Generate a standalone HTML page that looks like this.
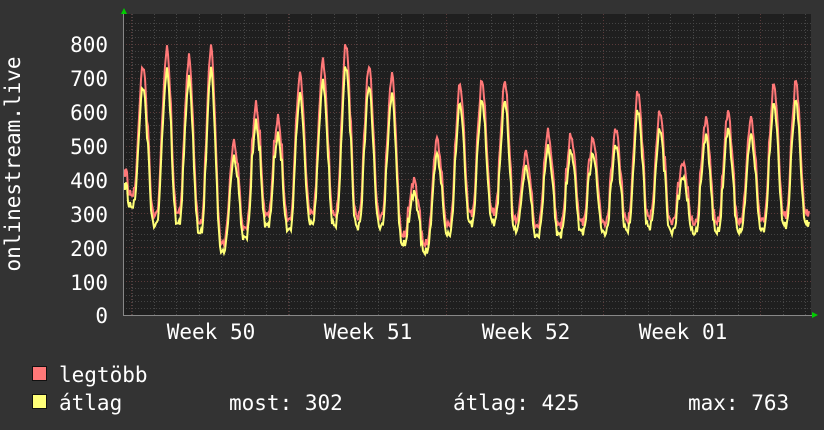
<!DOCTYPE html>
<html><head><meta charset="utf-8"><style>
html,body{margin:0;padding:0;background:#333333;width:824px;height:430px;overflow:hidden}
svg{display:block}
text{font-family:"DejaVu Sans Mono","Liberation Mono",monospace;fill:#ffffff;font-size:21px}
</style></head><body>
<svg id="g" width="824" height="430" xmlns="http://www.w3.org/2000/svg">
<rect x="0" y="0" width="824" height="430" fill="#333333"/>
<rect x="123" y="14" width="688" height="302" fill="#1f1f1f"/>
<g id="grid"></g>
<path id="red" fill="none" stroke="#ff7878" stroke-width="2"/>
<path id="yel" fill="none" stroke="#ffff78" stroke-width="2"/>
<line x1="123" y1="315.5" x2="812" y2="315.5" stroke="#888" stroke-width="1"/>
<line x1="123.5" y1="14" x2="123.5" y2="316" stroke="#888" stroke-width="1"/>
<polygon points="121,14 127,14 124,8" fill="#00cc00"/>
<polygon points="812,312 812,318 818,315" fill="#00cc00"/>
<g text-anchor="end">
<text x="108" y="52">800</text>
<text x="108" y="86">700</text>
<text x="108" y="120">600</text>
<text x="108" y="154">500</text>
<text x="108" y="188">400</text>
<text x="108" y="222">300</text>
<text x="108" y="256">200</text>
<text x="108" y="290">100</text>
<text x="108" y="323">0</text>
</g>
<text transform="translate(20,164) rotate(-90)" text-anchor="middle">onlinestream.live</text>
<g text-anchor="middle">
<text x="211" y="339">Week 50</text>
<text x="368" y="339">Week 51</text>
<text x="526" y="339">Week 52</text>
<text x="683" y="339">Week 01</text>
</g>
<rect x="32.5" y="366.5" width="14" height="14" fill="#ff7878" stroke="#111"/>
<rect x="32.5" y="394.5" width="14" height="14" fill="#ffff78" stroke="#111"/>
<text x="59" y="382">legtöbb</text>
<text x="59" y="410">átlag</text>
<text x="229" y="410">most: 302</text>
<text x="453" y="410">átlag: 425</text>
<text x="688" y="410">max: 763</text>
</svg>
<script>
var ns="http://www.w3.org/2000/svg",g=document.getElementById("grid");
function ln(x1,y1,x2,y2,c){var l=document.createElementNS(ns,"line");l.setAttribute("x1",x1);l.setAttribute("y1",y1);l.setAttribute("x2",x2);l.setAttribute("y2",y2);l.setAttribute("stroke",c);l.setAttribute("stroke-width","1");l.setAttribute("stroke-dasharray","1,2");g.appendChild(l);}
function Y(v){return 315-v*0.339;}
for(var v=20;v<=860;v+=20){var y=Math.round(Y(v))+0.5;if(y<14)break;ln(123,y,811,y,v%100==0?"#5a3a3a":"#444");}
for(var x=131.5-22.45;x<811;x+=22.45){if(x<124)continue;ln(Math.round(x)+0.5,14,Math.round(x)+0.5,316,"#484848");}
[131,288,446,603,760].forEach(function(x){ln(x+0.5,14,x+0.5,316,"#5a3a3a");});
var pk=[[121,450,420],[143,735,290],[167,785,300],[189,760,300],[211,790,240],[234,510,180],[256,620,330],[278,580,260],[300,710,300],[323,750,300],[346,800,290],[369,735,290],[392,710,290],[414,400,180],[437,520,240],[460,680,290],[482,690,310],[505,690,300],[526,480,260],[548,540,260],[571,530,270],[593,520,280],[616,550,260],[638,660,300],[660,600,280],[683,450,270],[706,580,270],[728,600,280],[751,580,270],[774,680,290],[796,690,300],[818,600,300]];
function val(x){var i=0;while(i<pk.length-2&&pk[i+1][0]<x)i++;
var a=pk[i],b=pk[i+1];
var ph=(x-a[0])/(b[0]-a[0]);var tr=(a[2]+b[2])/2;
var P=ph<0.5?a[1]:b[1];var d=Math.abs(ph<0.5?ph:1-ph);
var s=Math.pow(Math.cos(Math.min(d,0.5)*Math.PI),3);
var n=Math.sin(x*1.7)*8+Math.sin(x*3.1)*6;
var sh=Math.sin(x*0.9)*0.5+0.5;
return tr+(P-tr)*s+n+(s>0.2&&s<0.6?sh*40:0);}
var r="",yy="";
for(var x=124;x<=809;x+=1){var v=val(x);var w=v*0.93-10;
r+=(x==124?"M":"L")+x+" "+Y(v).toFixed(1);
yy+=(x==124?"M":"L")+x+" "+Y(w).toFixed(1);}
document.getElementById("red").setAttribute("d",r);
document.getElementById("yel").setAttribute("d",yy);
</script>
</body></html>
